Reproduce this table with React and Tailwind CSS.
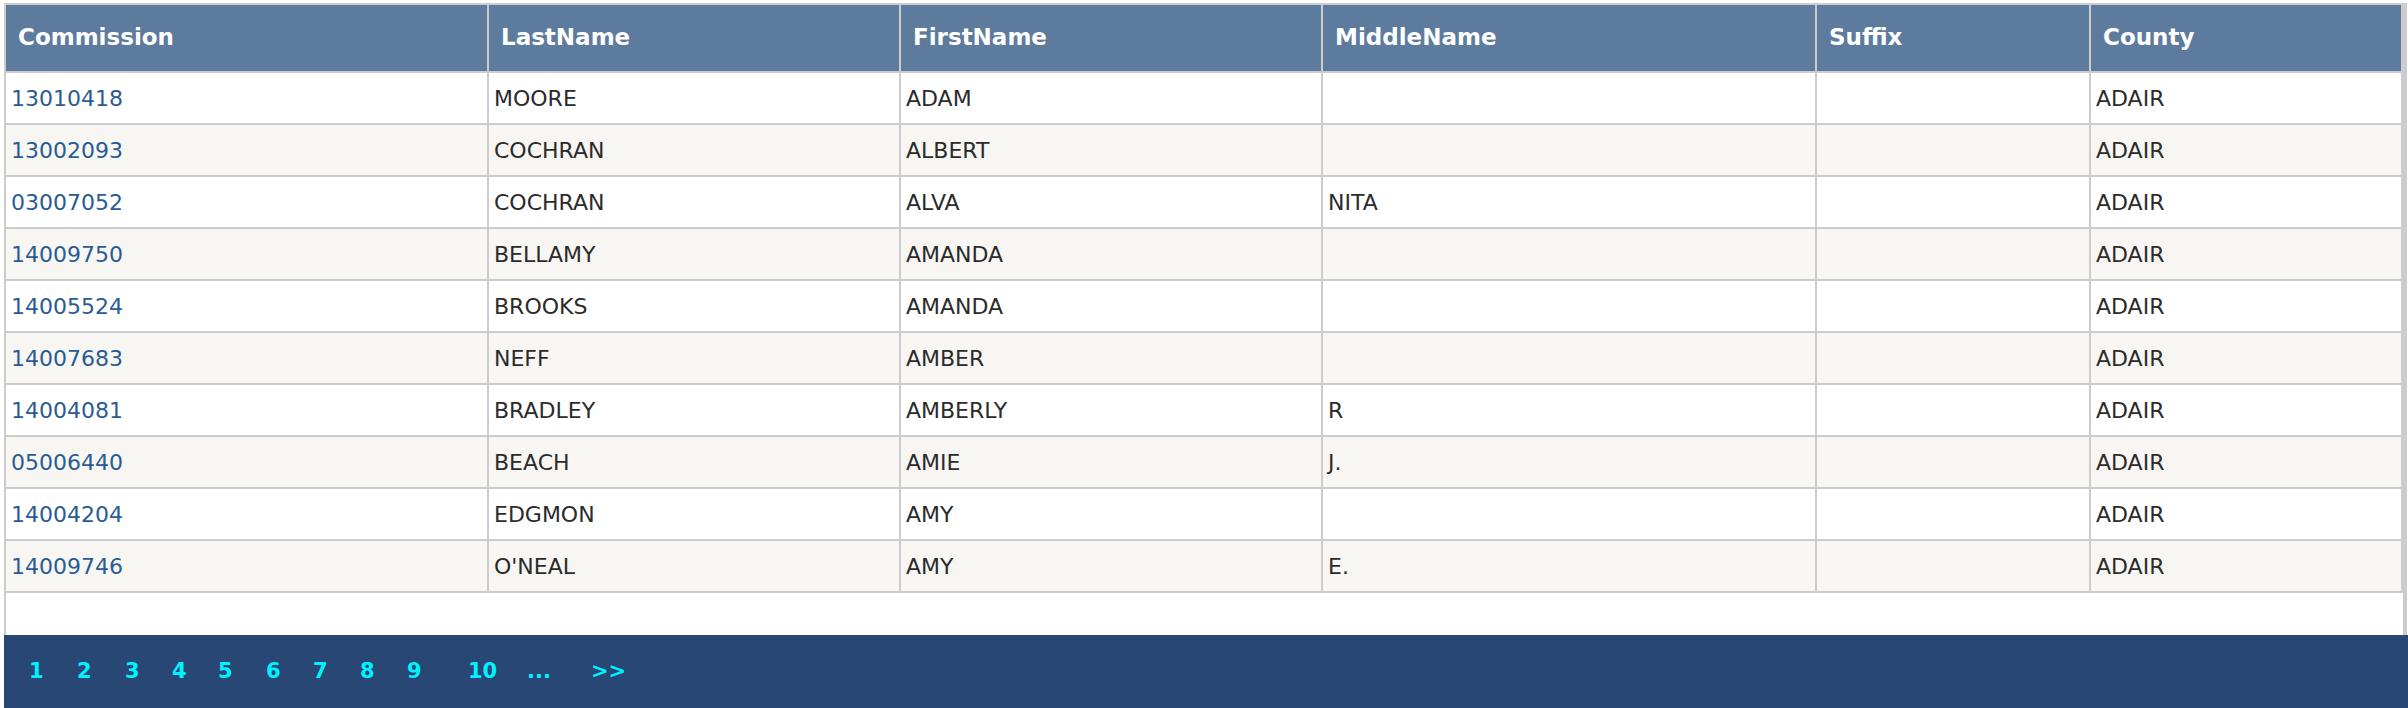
import React from "react";

const rows = [
  { id: "13010418", last: "MOORE", first: "ADAM", middle: "", suffix: "", county: "ADAIR" },
  { id: "13002093", last: "COCHRAN", first: "ALBERT", middle: "", suffix: "", county: "ADAIR" },
  { id: "03007052", last: "COCHRAN", first: "ALVA", middle: "NITA", suffix: "", county: "ADAIR" },
  { id: "14009750", last: "BELLAMY", first: "AMANDA", middle: "", suffix: "", county: "ADAIR" },
  { id: "14005524", last: "BROOKS", first: "AMANDA", middle: "", suffix: "", county: "ADAIR" },
  { id: "14007683", last: "NEFF", first: "AMBER", middle: "", suffix: "", county: "ADAIR" },
  { id: "14004081", last: "BRADLEY", first: "AMBERLY", middle: "R", suffix: "", county: "ADAIR" },
  { id: "05006440", last: "BEACH", first: "AMIE", middle: "J.", suffix: "", county: "ADAIR" },
  { id: "14004204", last: "EDGMON", first: "AMY", middle: "", suffix: "", county: "ADAIR" },
  { id: "14009746", last: "O'NEAL", first: "AMY", middle: "E.", suffix: "", county: "ADAIR" },
];

const headers = ["Commission", "LastName", "FirstName", "MiddleName", "Suffix", "County"];

// pager links with their cell widths
const pages = [
  { label: "1", w: "w-[48px]" },
  { label: "2", w: "w-[48px]" },
  { label: "3", w: "w-[47px]" },
  { label: "4", w: "w-[46px]" },
  { label: "5", w: "w-[48px]" },
  { label: "6", w: "w-[47px]" },
  { label: "7", w: "w-[47px]" },
  { label: "8", w: "w-[47px]" },
  { label: "9", w: "w-[61px]" },
  { label: "10", w: "w-[59px]" },
  { label: "...", w: "w-[64px]" },
  { label: ">>", w: "w-[40px]" },
];

const cols = "grid grid-cols-[481px_410px_420px_492px_272px_310px] gap-x-[2px]";

export default function App() {
  return (
    <div
      className="w-[2408px] h-[708px] overflow-hidden bg-white pl-[4px] pt-[3px]"
      style={{ fontFamily: '"DejaVu Sans", Verdana, sans-serif' }}
    >
      <div className="w-[2403px] border-t-2 border-l-2 border-r-[4px] border-[#cccccc] bg-white">
        <div className="flex flex-col gap-y-[2px] bg-[#cccccc] pb-[2px]">
          <div className={cols}>
            {headers.map((h) => (
              <div
                key={h}
                className="h-[66px] bg-[#5d7b9d] text-white font-bold text-[23px] flex items-center pl-[12px] pb-[2px]"
              >
                {h}
              </div>
            ))}
          </div>
          {rows.map((r, i) => (
            <div key={r.id} className={cols}>
              {[r.id, r.last, r.first, r.middle, r.suffix, r.county].map((v, j) => (
                <div
                  key={j}
                  className={
                    "h-[50px] flex items-center pl-[5px] text-[22px] " +
                    (i % 2 === 0 ? "bg-white " : "bg-[#f7f6f3] ") +
                    (j === 0 ? "text-[#2a5b93]" : "text-[#2b2b2b]")
                  }
                >
                  {j === 0 ? <a href="#">{v}</a> : v}
                </div>
              ))}
            </div>
          ))}
        </div>
        <div className="h-[42px] bg-white"></div>
      </div>
      <div className="w-[2404px] h-[90px] bg-[#284775] flex items-start pt-[21px] pl-[25px]">
        {pages.map((p) => (
          <a key={p.label} href="#" className={"shrink-0 text-[#00f2ff] font-bold text-[21px] " + p.w}>
            {p.label}
          </a>
        ))}
      </div>
    </div>
  );
}
